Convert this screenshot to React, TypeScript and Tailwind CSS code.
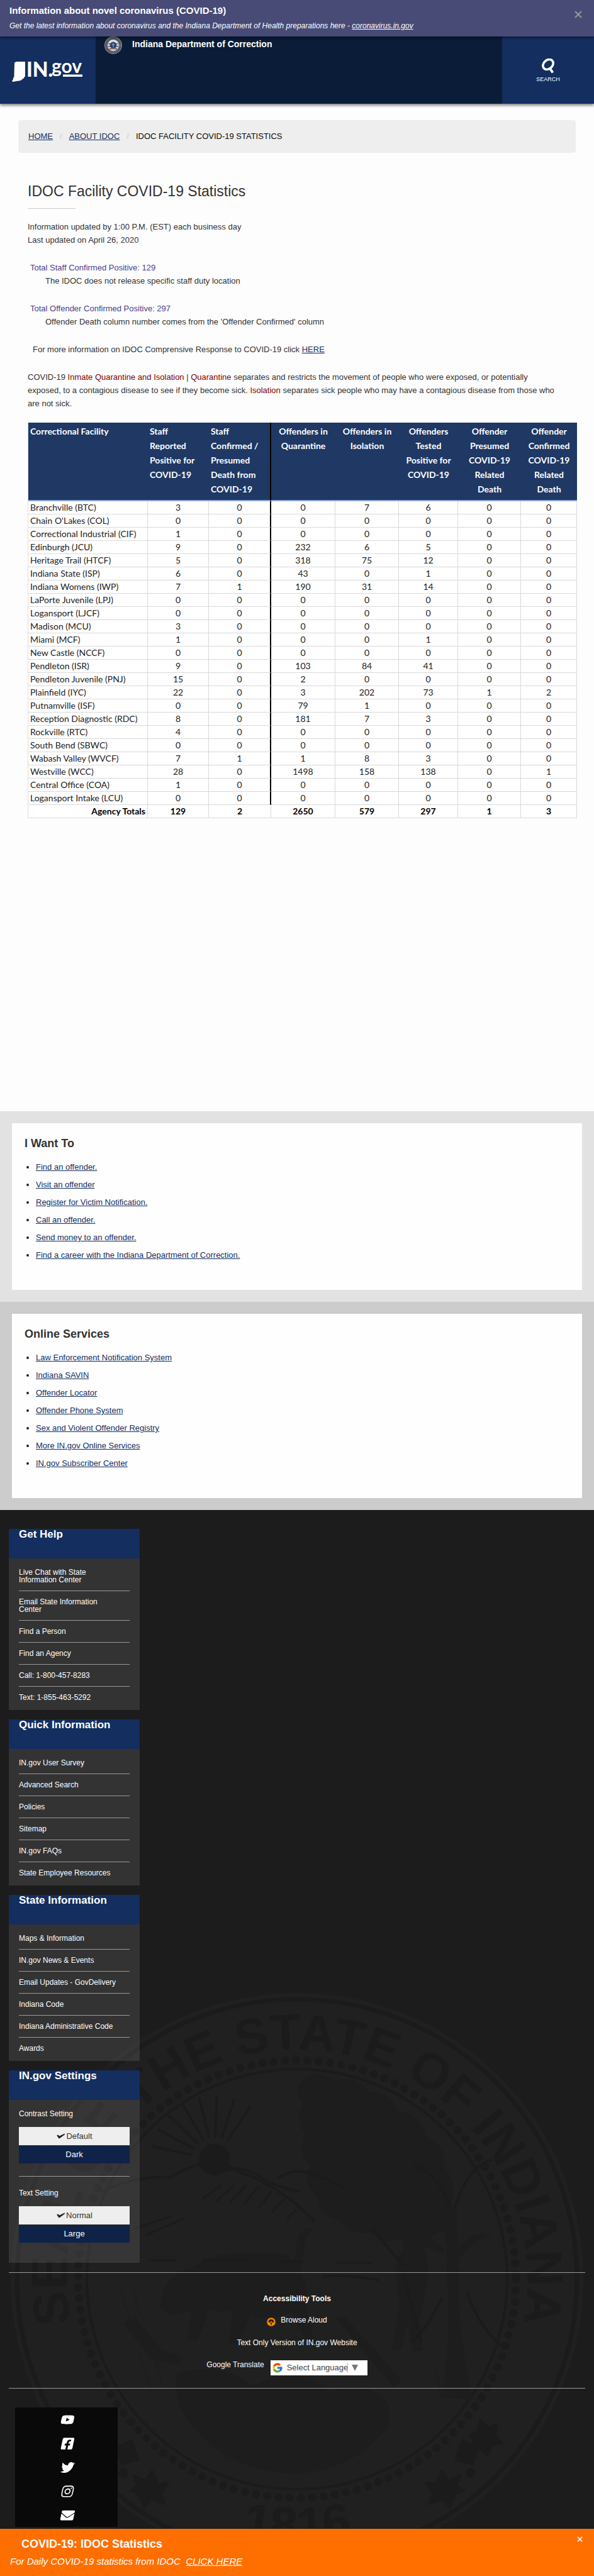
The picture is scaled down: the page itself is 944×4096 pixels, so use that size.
import type { ReactNode } from "react";
import { FaYoutube, FaFacebookSquare, FaTwitter, FaInstagram, FaEnvelope } from "react-icons/fa";
import { FcGoogle } from "react-icons/fc";

const columns = [
  { lines: ["Correctional Facility"], width: "w-[190px]", align: "text-left" },
  { lines: ["Staff", "Reported", "Positive for", "COVID-19"], width: "w-[97px]", align: "text-left" },
  { lines: ["Staff", "Confirmed /", "Presumed", "Death from", "COVID-19"], width: "w-[99px]", align: "text-left" },
  { lines: ["Offenders in", "Quarantine"], width: "w-[102px]", align: "text-center" },
  { lines: ["Offenders in", "Isolation"], width: "w-[101px]", align: "text-center" },
  { lines: ["Offenders", "Tested", "Positive for", "COVID-19"], width: "w-[94px]", align: "text-center" },
  { lines: ["Offender", "Presumed", "COVID-19", "Related", "Death"], width: "w-[100px]", align: "text-center" },
  { lines: ["Offender", "Confirmed", "COVID-19", "Related", "Death"], width: "w-[89px]", align: "text-center" },
];

const facilities: [string, ...number[]][] = [
  ["Branchville (BTC)", 3, 0, 0, 7, 6, 0, 0],
  ["Chain O'Lakes (COL)", 0, 0, 0, 0, 0, 0, 0],
  ["Correctional Industrial (CIF)", 1, 0, 0, 0, 0, 0, 0],
  ["Edinburgh (JCU)", 9, 0, 232, 6, 5, 0, 0],
  ["Heritage Trail (HTCF)", 5, 0, 318, 75, 12, 0, 0],
  ["Indiana State (ISP)", 6, 0, 43, 0, 1, 0, 0],
  ["Indiana Womens (IWP)", 7, 1, 190, 31, 14, 0, 0],
  ["LaPorte Juvenile (LPJ)", 0, 0, 0, 0, 0, 0, 0],
  ["Logansport (LJCF)", 0, 0, 0, 0, 0, 0, 0],
  ["Madison (MCU)", 3, 0, 0, 0, 0, 0, 0],
  ["Miami (MCF)", 1, 0, 0, 0, 1, 0, 0],
  ["New Castle (NCCF)", 0, 0, 0, 0, 0, 0, 0],
  ["Pendleton (ISR)", 9, 0, 103, 84, 41, 0, 0],
  ["Pendleton Juvenile (PNJ)", 15, 0, 2, 0, 0, 0, 0],
  ["Plainfield (IYC)", 22, 0, 3, 202, 73, 1, 2],
  ["Putnamville (ISF)", 0, 0, 79, 1, 0, 0, 0],
  ["Reception Diagnostic (RDC)", 8, 0, 181, 7, 3, 0, 0],
  ["Rockville (RTC)", 4, 0, 0, 0, 0, 0, 0],
  ["South Bend (SBWC)", 0, 0, 0, 0, 0, 0, 0],
  ["Wabash Valley (WVCF)", 7, 1, 1, 8, 3, 0, 0],
  ["Westville (WCC)", 28, 0, 1498, 158, 138, 0, 1],
  ["Central Office (COA)", 1, 0, 0, 0, 0, 0, 0],
  ["Logansport Intake (LCU)", 0, 0, 0, 0, 0, 0, 0],
];

const totals = [129, 2, 2650, 579, 297, 1, 3];

const wantTo = [
  "Find an offender.",
  "Visit an offender",
  "Register for Victim Notification.",
  "Call an offender.",
  "Send money to an offender.",
  "Find a career with the Indiana Department of Correction.",
];

const onlineServices = [
  "Law Enforcement Notification System",
  "Indiana SAVIN",
  "Offender Locator",
  "Offender Phone System",
  "Sex and Violent Offender Registry",
  "More IN.gov Online Services",
  "IN.gov Subscriber Center",
];

const footerGroups = [
  {
    title: "Get Help",
    links: [
      "Live Chat with State Information Center",
      "Email State Information Center",
      "Find a Person",
      "Find an Agency",
      "Call: 1-800-457-8283",
      "Text: 1-855-463-5292",
    ],
  },
  {
    title: "Quick Information",
    links: ["IN.gov User Survey", "Advanced Search", "Policies", "Sitemap", "IN.gov FAQs", "State Employee Resources"],
  },
  {
    title: "State Information",
    links: [
      "Maps & Information",
      "IN.gov News & Events",
      "Email Updates - GovDelivery",
      "Indiana Code",
      "Indiana Administrative Code",
      "Awards",
    ],
  },
];

function CloseIcon({ className }: { className: string }) {
  return (
    <svg viewBox="0 0 12 12" className={className} fill="none" stroke="currentColor" aria-hidden="true">
      <path d="M1 1l10 10M11 1L1 11" />
    </svg>
  );
}

function Logo() {
  return (
    <svg viewBox="0 0 116 34" className="h-[34px] w-[116px] overflow-visible" fill="#fff" role="img" aria-label="IN.gov">
      <path d="M4 1.5 7.500 0H21v23.500l-1.500 1.200-.8 2-2.400 1-1 1.800-2.300.2-1.200 1-2.200-.3-1.200.6-2 .1-2 .6-3.400.3-.8-1.800 1.500-1.500L2 26.200l1.400-2.200L3.500 20z" />
      <text x="23" y="24" fontFamily="Lato, sans-serif" fontWeight="900" fontSize="32">
        IN.
      </text>
      <text x="63" y="18" fontFamily="Lato, sans-serif" fontWeight="700" fontSize="30">
        gov
      </text>
      <rect x="81" y="20.500" width="31" height="3.500" />
    </svg>
  );
}

function Emblem() {
  return (
    <svg viewBox="0 0 30 30" className="size-7" aria-hidden="true">
      <circle cx="15" cy="15" r="14.300" fill="#2b3d66" stroke="#a89c6a" strokeWidth="1.200" />
      <circle cx="15" cy="15" r="11.800" fill="none" stroke="#7d90ad" strokeWidth="2" strokeDasharray="1.200 1.300" />
      <circle cx="15" cy="15" r="9.800" fill="#e9e4de" stroke="#a89c6a" strokeWidth=".8" />
      <path d="M7 12.500h16M6.500 17h17M8.500 21h13" stroke="#a8392f" strokeWidth="1.800" />
      <circle cx="15" cy="15" r="6" fill="#20406f" stroke="#86a0c4" strokeWidth="1" />
      <path d="M15 11v8M12.500 14h5" stroke="#9fb4cc" strokeWidth="1.100" />
    </svg>
  );
}

function Check() {
  return (
    <svg viewBox="0 0 16 10" className="h-[9px] w-[15px]" aria-hidden="true">
      <path d="M1 3.500l2.500-.8 2 2.300L15 .5l.3 1.600L6 9.300 4.300 9z" fill="#222" />
    </svg>
  );
}

function StateSeal() {
  const rays = [-100, -84, -68, -52, -36, -20, -4, 12];
  return (
    <svg
      viewBox="-455 -455 910 910"
      className="pointer-events-none absolute -bottom-[58px] left-[17px] size-[910px] select-none"
      aria-hidden="true"
    >
      <defs>
        <path id="ring-top" d="M-338 141A366 366 0 1 1 338 141" />
        <path id="ring-bottom" d="M-296 296A418 418 0 0 0 296 296" />
      </defs>
      <circle r="455" fill="#202020" />
      <circle r="445" fill="none" stroke="#1b1b1b" strokeWidth="7" />
      <circle r="348" fill="none" stroke="#1b1b1b" strokeWidth="13" strokeLinecap="round" strokeDasharray="0 18" />
      <circle r="334" fill="none" stroke="#1b1b1b" strokeWidth="4" />
      <g fill="#1b1b1b" fontFamily="Liberation Sans, sans-serif" fontWeight="700" fontSize="80" textAnchor="middle">
        <text>
          <textPath href="#ring-top" startOffset="50%">
            SEAL OF THE STATE OF INDIANA
          </textPath>
        </text>
        <text>
          <textPath href="#ring-bottom" startOffset="50%">
            1816
          </textPath>
        </text>
      </g>
      <g fill="#1b1b1b">
        <circle cx="-131" cy="-190" r="25" />
        <path d="M-290 268l28-14 12 34-30 8zM290 268l-28-14-12 34 30 8z" />
        <path d="M-262 310l20 8 12-16 10 22 18-2-12 18 6 20-22-8-14 14-8-22-16-8 12-8zM262 310l-20 8-12-16-10 22-18-2 12 18-6 20 22-8 14 14 8-22 16-8-12-8z" />
        <path d="M290 220l14 14 16-6-4 20 14 14-20 4-6 18-12-12-18 4 6-16-8-14 14-4z" />
        <circle cx="-276" cy="308" r="8" />
        <circle cx="276" cy="308" r="8" />
      </g>
      <g fill="#1d1d1d">
        <path d="M10-318q24-16 52 2 34-8 52 18 36 0 44 30 40 4 46 40 34 16 30 50 26 30 8 60 10 34-22 46-24 22-50 6-30 14-52-8-36 6-50-20-34-6-36-38-26-20-10-48-24-22-8-50-20-24-4-48-18-22 0-40z" />
        <path d="M232-110l22 0q4 90 4 150 2 70 22 150l-50 0q14-90 10-160-2-70-8-140zM180-60q30-16 54 12l0 10q-30-20-54-10zM256-50q26-30 54-20-30 6-54 40z" />
        <path d="M168-86q14-12 22 4l2 22q16 12 16 44l-4 40-10 40 6 50-16 0-8-46-10 44-14 0 10-70-4-50q-6-24 10-36z" />
        <path d="M-218 44q6-54 50-62 44-30 104-22 50-6 60 14l4-34q4-24 26-20-14 10-14 26l-6 44q16 26 8 54l14 54-12 4-24-50q-30 16-66 6l-20 44-14-2 6-52q-24 8-36-2l-20 52-16 0 6-50q-34 20-50-4z" />
        <path d="M-276 70l20-8 40 50 36 12-10 12-40-8zM60 60l16 0 90 100-12 12z" />
        <path d="M-190 150q70-20 120 20 80-40 120 10 50-20 90 10 20 40-10 60-40 50-130 60-110-6-160-70-40-40-30-90z" />
      </g>
      <g fill="none" stroke="#1b1b1b" strokeWidth="4">
        {rays.map((a) => (
          <path key={a} d="M-131-226V-292" transform={`rotate(${a + 22} -131 -190)`} />
        ))}
        <path d="M-310-140q60-26 110-22 60-40 110-8 60 20 118 78M-130-165q30-20 66-2 20 18 70 28M-30-160q30-22 66-2 20 4 40 20" />
        <path d="M-236-30h44M-150-30h70M-30-28h40M60-26h60M40-4q50-4 90 6" />
        <path d="M250-110q20-70 60-80M245-110q-20-60-60-70M270 20q20 60 60 90M230 30q-30 60-50 70M170-20l-50-60M168-10l30 110" />
        <path d="M-200-100l-60 20M-180-96l-60 26M-120-150l-30 22M-100-150l-28 26M-80-150l-26 28M-60-148l-24 28M-40-140l-20 26M-20-128l-20 22M0-112l-18 18" strokeWidth="3" />
        <path d="M-250 120l20 60M-230 110l16 60M-280 20l16 50M-262 14l14 44M240 130l10 60M260 120l8 60M220 140l10 50M-150 190l12 80M-120 200l8 90M-60 210l0 90M-20 210l0 90M40 200l-10 90M80 200l-20 80M130 200l-20 60" strokeWidth="3" stroke="#1e1e1e" />
      </g>
    </svg>
  );
}

function FooterCard({ title, children }: { title: string; children: ReactNode }) {
  return (
    <section className="w-52 bg-white/10">
      <h2 className="h-[47px] bg-[#132e5f] px-4 text-[17px] leading-[17px] font-bold">{title}</h2>
      {children}
    </section>
  );
}

function Choice({ label, options }: { label: string; options: [string, string] }) {
  return (
    <div role="group" aria-label={label}>
      <p className="text-xs leading-3">{label}</p>
      <div className="mt-[15px] flex flex-col gap-px text-[13px]">
        <button type="button" aria-pressed="true" className="flex h-[29px] items-center justify-center gap-px bg-[#eee] text-[#333]">
          <Check />
          {options[0]}
        </button>
        <button type="button" aria-pressed="false" className="h-7 bg-[#0f2248]">
          {options[1]}
        </button>
      </div>
    </div>
  );
}

function LinkPanel({ title, links, tone, pad }: { title: string; links: string[]; tone: string; pad: string }) {
  return (
    <section className={`px-[19px] py-[19px] ${tone}`}>
      <div className={`bg-[#fefefe] px-5 pt-5 ${pad}`}>
        <h2 className="text-[18px] leading-6 font-bold">{title}</h2>
        <ul className="mt-3 list-disc pl-[18px] text-[13px] leading-7 text-[#222]">
          {links.map((l) => (
            <li key={l}>
              <a href="#" className="text-[#132e5f] underline">
                {l}
              </a>
            </li>
          ))}
        </ul>
      </div>
    </section>
  );
}

export default function App() {
  const social: [string, ReactNode][] = [
    ["YouTube", <FaYoutube />],
    ["Facebook", <FaFacebookSquare />],
    ["Twitter", <FaTwitter />],
    ["Instagram", <FaInstagram />],
    ["Email", <FaEnvelope />],
  ];
  return (
    <div className="bg-[#fdfdfd] font-['Liberation_Sans',Arial,sans-serif] text-[#333]">
      <aside className="relative z-10 flex h-[58px] items-start justify-between bg-[#484b75] px-[15px] pt-[7px] text-white shadow-[0_2px_4px_rgba(0,0,0,0.5)]">
        <div>
          <p className="text-[15px] leading-5 font-bold">Information about novel coronavirus (COVID-19)</p>
          <p className="mt-1 text-xs leading-5 italic">
            Get the latest information about coronavirus and the Indiana Department of Health preparations here -{" "}
            <a href="#" className="underline">
              coronavirus.in.gov
            </a>
          </p>
        </div>
        <button type="button" aria-label="Dismiss notice" className="mt-2.5 mr-1 text-[#999]">
          <CloseIcon className="size-3 stroke-2" />
        </button>
      </aside>

      <header className="relative flex h-[107px] bg-[#0b1c39] text-white shadow-[0_3px_4px_rgba(0,0,0,0.45)]">
        <a href="#" className="w-[152px] bg-[#132e5f] pt-10 pl-[19px]">
          <Logo />
        </a>
        <div className="flex flex-1 items-start gap-4 pl-[14px]">
          <Emblem />
          <p className="pt-0.5 text-[14px] leading-5 font-bold">Indiana Department of Correction</p>
        </div>
        <button type="button" className="flex w-[146px] flex-col items-center bg-[#132e5f] pt-[35px]">
          <svg viewBox="0 0 22 24" className="h-6 w-[22px]" fill="none" stroke="#fff" aria-hidden="true">
            <ellipse cx="11" cy="9.500" rx="9" ry="7" strokeWidth="3.600" transform="rotate(-42 11 9.500)" />
            <path d="M14.500 16.500l4 6" strokeWidth="4" />
          </svg>
          <span className="mt-[3px] text-[9px] leading-3">SEARCH</span>
        </button>
      </header>

      <main className="px-[29px] pt-[26px] pb-[466px]">
        <nav aria-label="Breadcrumb" className="rounded bg-[#eee] px-4 py-4 text-[13px] leading-5">
          <ol className="flex gap-[11px]">
            <li>
              <a href="#" className="text-[#132e5f] underline">
                HOME
              </a>
            </li>
            <li className="text-[#ccc]" aria-hidden="true">
              /
            </li>
            <li>
              <a href="#" className="text-[#132e5f] underline">
                ABOUT IDOC
              </a>
            </li>
            <li className="text-[#ccc]" aria-hidden="true">
              /
            </li>
            <li className="text-[#0a0a0a]">IDOC FACILITY COVID-19 STATISTICS</li>
          </ol>
        </nav>

        <article className="px-[15px] pt-[46px] text-[13px] leading-[21px]">
          <h1 className="text-[23px] leading-[30px]">IDOC Facility COVID-19 Statistics</h1>
          <div className="mt-3 h-px w-[76px] bg-[#ccc]" />
          <p className="mt-[18px]">
            Information updated by 1:00 P.M. (EST) each business day
            <br />
            Last updated on April 26, 2020
          </p>
          <p className="mt-[23px] pl-1 text-[#483d8b]">Total Staff Confirmed Positive: 129</p>
          <p className="pl-7">The IDOC does not release specific staff duty location</p>
          <p className="mt-[23px] pl-1 text-[#483d8b]">Total Offender Confirmed Positive: 297</p>
          <p className="pl-7">Offender Death column number comes from the 'Offender Confirmed' column</p>
          <p className="mt-[23px] pl-2">
            For more information on IDOC Comprensive Response to COVID-19 click{" "}
            <a href="#" className="text-[#132e5f] underline">
              HERE
            </a>
          </p>
          <p className="mt-[23px]">
            COVID-19 <span className="text-[#800000]">Inmate Quarantine and Isolation</span> |{" "}
            <span className="text-[#800000]">Quarantine</span> separates and restricts the movement of people who were
            exposed, or potentially
            <br />
            exposed, to a contagious disease to see if they become sick.{" "}
            <span className="text-[#800000]">Isolation</span> separates sick people who may have a contagious disease
            from those who
            <br />
            are not sick.
          </p>

          <table className="mt-5 w-full table-fixed border-separate border-spacing-0 border-l border-[#ddd] bg-white font-['Lato',sans-serif] text-[14px] text-[#222]">
            <colgroup>
              {columns.map((c, i) => (
                <col key={i} className={c.width} />
              ))}
            </colgroup>
            <thead>
              <tr className="bg-[#1f3864] align-top leading-[23px] text-white">
                {columns.map((c, i) => (
                  <th
                    key={i}
                    scope="col"
                    className={`border-b-2 border-b-[#8faadc] pt-0.5 pb-1.5 font-bold whitespace-nowrap ${c.align} ${
                      i === 2 ? "border-r-2 border-r-black" : ""
                    } ${i < 3 ? "pl-[3px]" : ""}`}
                  >
                    {c.lines.map((l) => (
                      <span key={l} className="block">
                        {l}
                      </span>
                    ))}
                  </th>
                ))}
              </tr>
            </thead>
            <tbody className="text-center leading-5">
              {facilities.map(([name, ...values]) => (
                <tr key={name}>
                  <th scope="row" className="border-r border-b border-[#d9d9d9] pl-[3px] text-left font-normal whitespace-nowrap">
                    {name}
                  </th>
                  {values.map((v, i) => (
                    <td
                      key={i}
                      className={
                        i === 1 ? "border-r-2 border-b border-r-black border-b-[#d9d9d9]" : "border-r border-b border-[#d9d9d9]"
                      }
                    >
                      {v}
                    </td>
                  ))}
                </tr>
              ))}
              <tr className="font-bold text-black">
                <th scope="row" className="border-r border-b border-[#d9d9d9] pr-[3px] text-right">
                  Agency Totals
                </th>
                {totals.map((v, i) => (
                  <td key={i} className="border-r border-b border-[#d9d9d9]">
                    {v}
                  </td>
                ))}
              </tr>
            </tbody>
          </table>
        </article>
      </main>

      <LinkPanel title="I Want To" links={wantTo} tone="bg-[#e2e2e2]" pad="pb-[41px]" />
      <LinkPanel title="Online Services" links={onlineServices} tone="bg-[#ccc]" pad="pb-[41px]" />

      <footer className="relative overflow-hidden bg-[#1c1c1c] px-[14px] pt-[30px] pb-[3px] text-white">
        <StateSeal />
        <div className="relative">
          <div className="flex flex-col gap-[15px]">
            {footerGroups.map((g) => (
              <FooterCard key={g.title} title={g.title}>
                <ul className="px-4 pt-[5px] pb-[3px] text-xs leading-3">
                  {g.links.map((l, i) => (
                    <li key={l} className={i < g.links.length - 1 ? "border-b border-[#999] py-[11px]" : "py-[11px]"}>
                      <a href="#" className="block pr-4">
                        {l}
                      </a>
                    </li>
                  ))}
                </ul>
              </FooterCard>
            ))}
            <FooterCard title="IN.gov Settings">
              <div className="px-4 pt-4 pb-8">
                <Choice label="Contrast Setting" options={["Default", "Dark"]} />
                <hr className="my-5 border-t border-[#999]" />
                <Choice label="Text Setting" options={["Normal", "Large"]} />
              </div>
            </FooterCard>
          </div>

          <section className="mt-[15px] flex flex-col items-center border-y border-[#999] pt-[33px] pb-5 text-xs leading-4">
            <h3 className="font-bold">Accessibility Tools</h3>
            <a href="#" className="mt-[18px] flex gap-2">
              <svg viewBox="0 0 16 16" className="mt-1 size-[14px]" aria-hidden="true">
                <circle cx="8" cy="8" r="7.800" fill="#f08a00" />
                <path d="M3 8.500q0-5 5-5t5 5l-2.500 1V7L9 9.500v3.500H7V9.500L5.500 7v2.500z" fill="#2a1a08" />
                <circle cx="8" cy="8" r="1.300" fill="#f08a00" />
              </svg>
              Browse Aloud
            </a>
            <a href="#" className="mt-[18px]">
              Text Only Version of IN.gov Website
            </a>
            <div className="mt-5 flex items-start gap-2.5 pr-8">
              <label htmlFor="language" className="-mt-px">
                Google Translate
              </label>
              <div className="flex h-6 w-[154px] items-center bg-white pl-0.5 text-[13px] text-[#444]">
                <FcGoogle className="size-[18px]" aria-hidden="true" />
                <select id="language" className="ml-1.5 w-[96px] appearance-none bg-transparent leading-4 outline-none">
                  <option>Select Language</option>
                </select>
                <span className="flex h-4 items-center border-l border-[#bbb] pl-1.5">
                  <svg viewBox="0 0 10 10" className="size-2.5" aria-hidden="true">
                    <path d="M0 0h10L5 10z" fill="#767676" />
                  </svg>
                </span>
              </div>
            </div>
          </section>

          <ul className="mt-[30px] ml-2.5 w-[163px] bg-[#090909]">
            {social.map(([name, icon]) => (
              <li key={name}>
                <a href="#" aria-label={name} className="flex h-[38px] -skew-x-12 items-center justify-center pl-1 text-[21px]">
                  {icon}
                </a>
              </li>
            ))}
          </ul>
        </div>
      </footer>

      <aside className="relative flex h-[76px] items-start justify-between bg-[#ff6f00] px-4 pt-3 text-white">
        <div>
          <p className="pl-[18px] text-[18px] leading-6 font-bold">COVID-19: IDOC Statistics</p>
          <p className="mt-1 text-[15px] leading-6 italic">
            For Daily COVID-19 statistics from IDOC&nbsp;{" "}
            <a href="#" className="underline">
              CLICK HERE
            </a>
          </p>
        </div>
        <button type="button" aria-label="Close banner" className="mr-0.5">
          <CloseIcon className="size-[9px] stroke-2" />
        </button>
      </aside>
    </div>
  );
}
